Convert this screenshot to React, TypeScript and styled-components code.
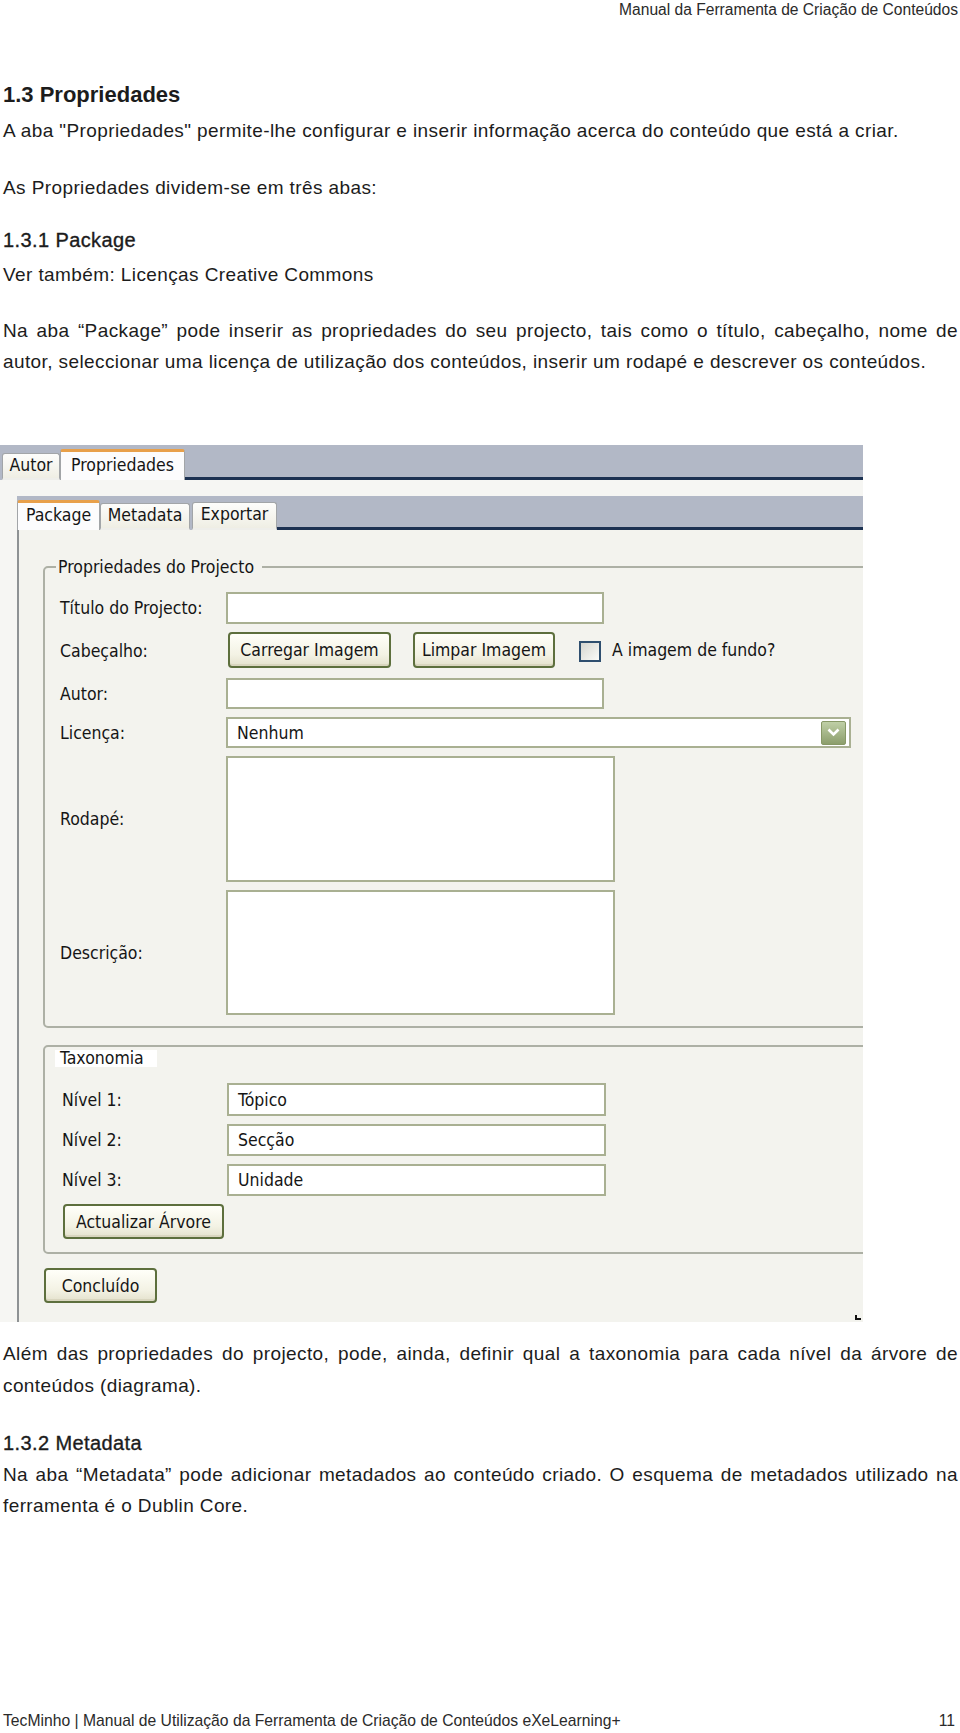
import styled, { createGlobalStyle, css } from 'styled-components'

const GlobalStyle = createGlobalStyle`
  html, body {
    margin: 0;
    padding: 0;
    background: #fff;
  }
  body {
    font-family: 'Liberation Sans', Arial, sans-serif;
    color: #1c1c1c;
  }
`

const Page = styled.div`
  width: 960px;
  height: 1733px;
  box-sizing: border-box;
  padding: 0 2px 0 3px;
  display: flex;
  flex-direction: column;
  overflow: hidden;
`

const RunningHead = styled.div`
  text-align: right;
  font-size: 15.6px;
  line-height: 20px;
  color: #2a2a2a;
`

const Title = styled.h1`
  margin: 60px 0 0;
  font-size: 22px;
  line-height: 30px;
  font-weight: bold;
`

const SubTitle = styled.h3<{ $mt: number }>`
  margin: ${(p) => p.$mt}px 0 0;
  font-size: 20px;
  line-height: 31px;
  font-weight: normal;
  letter-spacing: 0.4px;
  -webkit-text-stroke: 0.35px #1c1c1c;
`

const Para = styled.p<{ $mt: number; $lh?: number }>`
  margin: ${(p) => p.$mt}px 0 0;
  font-size: 19px;
  line-height: ${(p) => p.$lh ?? 31}px;
  letter-spacing: 0.4px;
`

// linha justificada até à margem direita
const FullLine = styled.span`
  display: block;
  text-align: justify;
  text-align-last: justify;
`

const Footer = styled.div`
  margin-top: auto;
  display: flex;
  justify-content: space-between;
  font-size: 15.7px;
  line-height: 24px;
  padding-right: 3px;
  color: #2a2a2a;
`

/* ---------- captura do ecrã ---------- */

const Shot = styled.div`
  margin: 68px 0 0 -3px;
  width: 863px;
  height: 877px;
  flex: none;
  background: #f6f6f3;
  overflow: hidden;
  position: relative;
  display: flex;
  flex-direction: column;
  font-family: 'DejaVu Sans Condensed', 'DejaVu Sans', sans-serif;
  font-stretch: condensed;
  font-size: 17.5px;
  color: #151515;
`

const TabStrip = styled.div<{ $indent?: number; $mt?: number; $h: number }>`
  display: flex;
  align-items: flex-end;
  flex: none;
  height: ${(p) => p.$h}px;
  margin: ${(p) => p.$mt ?? 0}px 0 0 ${(p) => p.$indent ?? 0}px;
  background: #b2b8c6;
`

const Tab = styled.div<{ $active?: boolean; $w: number; $h: number; $ml?: number }>`
  box-sizing: border-box;
  flex: none;
  width: ${(p) => p.$w}px;
  height: ${(p) => p.$h}px;
  margin-left: ${(p) => p.$ml ?? 0}px;
  display: flex;
  align-items: center;
  justify-content: center;
  padding-bottom: 3px;
  border: 1px solid #a2a5a8;
  border-radius: 3px 3px 0 0;
  ${(p) =>
    p.$active
      ? css`
          background: #fcfcfd;
          border-top: 3px solid #e8a04a;
          border-bottom: none;
        `
      : css`
          background: linear-gradient(#fdfdfb, #efeee4);
          border-bottom: 2px solid #eeeeea;
        `}
`

const TabLine = styled.div`
  flex: 1;
  height: 3px;
  background: #1c3152;
`

const Panel = styled.div`
  flex: 1;
  margin-left: 17px;
  border-left: 2px solid #8e9294;
  background: #f3f3ee;
  padding: 27px 0 0 24px;
  display: flex;
  flex-direction: column;
  align-items: flex-start;
`

const Group = styled.fieldset`
  margin: 0;
  width: 900px;
  box-sizing: border-box;
  border: 2px solid #adb0a5;
  border-radius: 5px;
  padding: 15px 0 11px 15px;
`

const Legend = styled.legend`
  margin-left: -4px;
  padding: 0 8px 0 2px;
  line-height: 20px;
`

const TaxBox = styled.div`
  margin-top: 17px;
  width: 900px;
  box-sizing: border-box;
  border: 2px solid #adb0a5;
  border-radius: 5px;
  padding: 3px 0 13px 17px;
`

const TaxTitle = styled.div`
  margin-left: -7px;
  width: 102px;
  height: 17px;
  box-sizing: border-box;
  padding-left: 5px;
  background: #fff;
  line-height: 17px;
`

const FormGrid = styled.div<{ $label: number; $mt?: number }>`
  display: grid;
  grid-template-columns: ${(p) => p.$label}px auto;
  row-gap: 8px;
  align-items: center;
  justify-items: start;
  margin-top: ${(p) => p.$mt ?? 0}px;
`

const Label = styled.div`
  line-height: 20px;
`

const Field = styled.div<{ $w: number; $h: number }>`
  box-sizing: border-box;
  width: ${(p) => p.$w}px;
  height: ${(p) => p.$h}px;
  border: 2px solid #a9b092;
  background: #fff;
  padding: 0 3px 0 9px;
  display: flex;
  align-items: center;
  justify-content: space-between;
`

const ButtonRow = styled.div`
  height: 38px;
  display: flex;
  align-items: flex-start;
  margin-left: 2px;
`

const Button = styled.div<{ $w: number; $h?: number; $ml?: number }>`
  box-sizing: border-box;
  width: ${(p) => p.$w}px;
  height: ${(p) => p.$h ?? 36}px;
  margin-left: ${(p) => p.$ml ?? 0}px;
  border: 2px solid #5d6f3d;
  border-radius: 4px;
  background: linear-gradient(#fffff9, #f3f2e4 65%, #e4e2cd);
  box-shadow: inset 0 -2px 0 #d9d6bf;
  display: flex;
  align-items: center;
  justify-content: center;
  flex: none;
`

const Check = styled.div`
  box-sizing: border-box;
  width: 22px;
  height: 21px;
  margin: 9px 11px 0 24px;
  border: 2px solid #2f4f6f;
  background: linear-gradient(135deg, #d6d6d0, #fbfbf8);
`

const CheckText = styled.span`
  margin-top: 8px;
  line-height: 20px;
`

const DropButton = styled.div`
  width: 25px;
  height: 24px;
  box-sizing: border-box;
  border: 1px solid #879866;
  border-radius: 2px;
  background: linear-gradient(#bfcfa6, #8c9e6c);
  display: flex;
  align-items: center;
  justify-content: center;
`

const Grip = styled.svg`
  position: absolute;
  right: 2px;
  bottom: 2px;
`

function FieldRow({ label, w, h, value, children }: { label: string; w: number; h: number; value?: string; children?: React.ReactNode }) {
  return (
    <>
      <Label>{label}</Label>
      <Field $w={w} $h={h}>
        <span>{value}</span>
        {children}
      </Field>
    </>
  )
}

function Screenshot() {
  return (
    <Shot>
      <TabStrip $h={35}>
        <Tab $w={58} $h={27} $ml={2}>Autor</Tab>
        <Tab $w={125} $h={31} $active>Propriedades</Tab>
        <TabLine />
      </TabStrip>
      <TabStrip $h={34} $mt={16} $indent={17}>
        <Tab $w={83} $h={30} $active>Package</Tab>
        <Tab $w={90} $h={27}>Metadata</Tab>
        <Tab $w={85} $h={28} $ml={2}>Exportar</Tab>
        <TabLine />
      </TabStrip>
      <Panel>
        <Group>
          <Legend>Propriedades do Projecto</Legend>
          <FormGrid $label={166}>
            <FieldRow label="Título do Projecto:" w={378} h={32} />
            <Label>Cabeçalho:</Label>
            <ButtonRow>
              <Button $w={163}>Carregar Imagem</Button>
              <Button $w={142} $ml={22}>Limpar Imagem</Button>
              <Check />
              <CheckText>A imagem de fundo?</CheckText>
            </ButtonRow>
            <FieldRow label="Autor:" w={378} h={31} />
            <FieldRow label="Licença:" w={625} h={31} value="Nenhum">
              <DropButton>
                <svg width="13" height="9" viewBox="0 0 13 9">
                  <path d="M1.5 1.5 L6.5 6.5 L11.5 1.5" fill="none" stroke="#fff" strokeWidth="2.6" />
                </svg>
              </DropButton>
            </FieldRow>
            <FieldRow label="Rodapé:" w={389} h={126} />
            <FieldRow label="Descrição:" w={389} h={125} />
          </FormGrid>
        </Group>
        <TaxBox>
          <TaxTitle>Taxonomia</TaxTitle>
          <FormGrid $label={165} $mt={16}>
            <FieldRow label="Nível 1:" w={379} h={33} value="Tópico" />
            <FieldRow label="Nível 2:" w={379} h={32} value="Secção" />
            <FieldRow label="Nível 3:" w={379} h={32} value="Unidade" />
            <Button $w={161} $h={35} $ml={1}>Actualizar Árvore</Button>
          </FormGrid>
        </TaxBox>
        <Button $w={113} $h={35} $ml={1} style={{ marginTop: 14 }}>Concluído</Button>
      </Panel>
      <Grip width="6" height="5" viewBox="0 0 6 5">
        <path d="M1 0 V4 H6" fill="none" stroke="#111" strokeWidth="2" />
      </Grip>
    </Shot>
  )
}

export default function App() {
  return (
    <>
      <GlobalStyle />
      <Page>
        <RunningHead>Manual da Ferramenta de Criação de Conteúdos</RunningHead>
        <Title>1.3 Propriedades</Title>
        <Para $mt={5}>A aba "Propriedades" permite-lhe configurar e inserir informação acerca do conteúdo que está a criar.</Para>
        <Para $mt={26}>As Propriedades dividem-se em três abas:</Para>
        <SubTitle $mt={22}>1.3.1 Package</SubTitle>
        <Para $mt={3}>Ver também: Licenças Creative Commons</Para>
        <Para $mt={25}>
          <FullLine>Na aba “Package” pode inserir as propriedades do seu projecto, tais como o título, cabeçalho, nome de</FullLine>
          autor, seleccionar uma licença de utilização dos conteúdos, inserir um rodapé e descrever os conteúdos.
        </Para>
        <Screenshot />
        <Para $mt={16} $lh={31.5}>
          <FullLine>Além das propriedades do projecto, pode, ainda, definir qual a taxonomia para cada nível da árvore de</FullLine>
          conteúdos (diagrama).
        </Para>
        <SubTitle $mt={27}>1.3.2 Metadata</SubTitle>
        <Para $mt={0}>
          <FullLine>Na aba “Metadata” pode adicionar metadados ao conteúdo criado. O esquema de metadados utilizado na</FullLine>
          ferramenta é o Dublin Core.
        </Para>
        <Footer>
          <span>TecMinho | Manual de Utilização da Ferramenta de Criação de Conteúdos eXeLearning+</span>
          <span>11</span>
        </Footer>
      </Page>
    </>
  )
}
